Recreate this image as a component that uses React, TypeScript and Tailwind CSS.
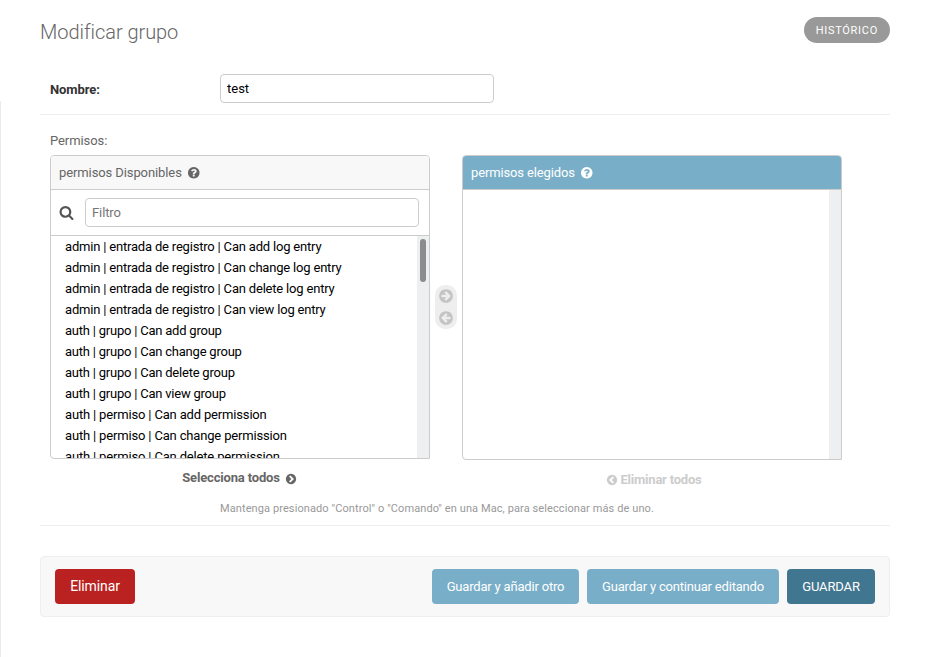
import React from "react";

const CIRCLE =
  "q0 209-103 385.5t-279.5 279.5-385.5 103-385.5-103-279.5-279.5-103-385.5 103-385.5 279.5-279.5 385.5-103 385.5 103 279.5 279.5 103 385.5z";

const ICONS = {
  search:
    "M1216 832q0-185-131.5-316.5t-316.5-131.5-316.5 131.5-131.5 316.5 131.5 316.5 316.5 131.5 316.5-131.5 131.5-316.5zm512 832q0 52-38 90t-90 38q-54 0-90-38l-343-342q-179 124-399 124-143 0-273.5-55.5t-225-150-150-225-55.5-273.5 55.5-273.5 150-225 225-150 273.5-55.5 273.5 55.5 225 150 150 225 55.5 273.5q0 220-124 399l343 343q37 37 37 90z",
  help:
    "M1024 1376v-192q0-14-9-23t-23-9h-192q-14 0-23 9t-9 23v192q0 14 9 23t23 9h192q14 0 23-9t9-23zm256-672q0-88-55.5-163t-138.5-116-170-41q-243 0-371 213-15 24 8 42l132 100q7 6 19 6 16 0 25-12 53-68 86-92 34-24 86-24 48 0 85.5 26t37.5 59q0 38-20 61t-68 45q-63 28-115.5 86.5t-52.5 125.5v36q0 14 9 23t23 9h192q14 0 23-9t9-23q0-19 21.5-49.5t54.5-49.5q32-18 49-28.5t46-35 44.5-48 28-60.5 12.5-81zm384 192" +
    CIRCLE,
  arrowRight:
    "M1413 896q0-27-18-45l-91-91-362-362q-18-18-45-18t-45 18l-91 91q-18 18-18 45t18 45l189 189h-502q-26 0-45 19t-19 45v128q0 26 19 45t45 19h502l-189 189q-19 19-19 45t19 45l91 91q18 18 45 18t45-18l362-362 91-91q18-18 18-45zm251 0" +
    CIRCLE,
  chevronRight:
    "M845 1395l454-454q19-19 19-45t-19-45l-454-454q-19-19-45-19t-45 19l-102 102q-19 19-19 45t19 45l307 307-307 307q-19 19-19 45t19 45l102 102q19 19 45 19t45-19zm819-499" +
    CIRCLE,
};

function Icon({ name, className }: { name: keyof typeof ICONS; className: string }) {
  return (
    <svg viewBox="0 0 1792 1792" fill="currentColor" className={`shrink-0 ${className}`} aria-hidden="true">
      <path d={ICONS[name]} />
    </svg>
  );
}

const PERMISSION_GROUPS = [
  {
    prefix: "admin | entrada de registro",
    tracking: "tracking-[-0.19px]",
    actions: ["Can add log entry", "Can change log entry", "Can delete log entry", "Can view log entry"],
  },
  {
    prefix: "auth | grupo",
    tracking: "tracking-[-0.22px]",
    actions: ["Can add group", "Can change group", "Can delete group", "Can view group"],
  },
  {
    prefix: "auth | permiso",
    tracking: "tracking-[-0.165px]",
    actions: ["Can add permission", "Can change permission", "Can delete permission"],
  },
];

function Available() {
  return (
    <div className="w-[380px]">
      <div className="flex h-[304px] flex-col overflow-hidden rounded-t rounded-bl border border-[#ccc]">
        <div className="flex h-[34px] shrink-0 items-center border-b border-[#ccc] bg-[#f8f8f8] pl-2 tracking-[-0.1px]">
          permisos Disponibles
          <Icon name="help" className="ml-[5px] size-[13.5px]" />
        </div>
        <div className="flex h-[46px] shrink-0 items-center border-b border-[#ccc] pl-2">
          <Icon name="search" className="size-[15px] text-[#555]" />
          <input
            placeholder="Filtro"
            className="ml-[11px] h-[29px] w-[334px] rounded border border-[#ccc] px-1.5 text-[13px] tracking-[-0.1px] placeholder:text-[#757575]"
          />
        </div>
        <div className="flex min-h-0 grow overflow-hidden">
          <ul className="grow pl-[14px] text-black">
            {PERMISSION_GROUPS.map(({ prefix, tracking, actions }) =>
              actions.map((action) => (
                <li key={prefix + action} className={`h-[21px] leading-[21px] ${tracking}`}>
                  {`${prefix} | ${action}`}
                </li>
              )),
            )}
          </ul>
          <div className="w-3 bg-[#edeff0] px-[3px] pt-[3px]">
            <div className="h-[43px] rounded-full bg-[#8b8c8e]" />
          </div>
        </div>
      </div>
      <div className="mt-[11px] flex h-4 items-center justify-center pr-px font-bold tracking-[-0.16px]">
        Selecciona todos
        <Icon name="chevronRight" className="mt-[2px] ml-[5px] size-3" />
      </div>
    </div>
  );
}

function Chosen() {
  return (
    <div className="w-[380px]">
      <div className="flex h-[305px] flex-col overflow-hidden rounded-t rounded-bl border border-[#ccc]">
        <div className="flex h-[34px] shrink-0 items-center border-b border-[#ccc] bg-[#79aec8] pl-2 tracking-[-0.13px] text-white">
          permisos elegidos
          <Icon name="help" className="ml-[5px] size-[13.5px]" />
        </div>
        <div className="flex grow justify-end">
          <div className="w-3 bg-[#edeff0]" />
        </div>
      </div>
      <div className="mt-3 flex h-4 items-center justify-center pl-[3px] font-bold tracking-[-0.22px] text-[#ccc]">
        <Icon name="chevronRight" className="mr-[3px] size-3 -scale-x-100" />
        Eliminar todos
      </div>
    </div>
  );
}

export default function App() {
  return (
    <div className="flex h-[657px] w-[930px] overflow-hidden bg-white font-['Roboto',sans-serif] text-[13px] leading-4 text-[#666]">
      <div className="mt-[101px] w-px bg-[#eaeaea]" />
      <main className="mr-10 ml-[39px] grow">
        <header className="flex h-[74px] items-start justify-between">
          <h1 className="mt-5 text-[20px] leading-6 font-light tracking-[-0.05px]">Modificar grupo</h1>
          <a className="mt-[17px] flex h-[26px] items-center rounded-full bg-[#999] px-3 pt-px text-[11px] tracking-[0.72px] text-white">
            HISTÓRICO
          </a>
        </header>
        <div className="flex h-[41px] items-start border-b border-[#eee] pl-[10px]">
          <label className="mt-2 w-[170px] font-bold tracking-[-0.08px] text-[#333]">Nombre:</label>
          <input
            defaultValue="test"
            className="h-[29px] w-[274px] rounded border border-[#ccc] px-1.5 text-[13px] text-black"
          />
        </div>
        <section className="h-[411px] border-b border-[#eee] pt-[18px] pl-[10px]">
          <div className="h-[22px] tracking-[-0.08px]">Permisos:</div>
          <div className="flex items-start">
            <Available />
            <div className="mx-[5px] mt-[130px] flex h-11 w-[22px] flex-col items-center justify-between rounded-[10px] bg-[#eee] py-[3px] text-[#c4c4c4]">
              <Icon name="arrowRight" className="size-4" />
              <Icon name="arrowRight" className="size-4 -scale-x-100" />
            </div>
            <Chosen />
          </div>
          <p className="mt-[13px] ml-[170px] text-[11px] leading-4 tracking-[0.098px] text-[#999]">
            Mantenga presionado "Control" o "Comando" en una Mac, para seleccionar más de uno.
          </p>
        </section>
        <footer className="mt-[30px] flex h-[61px] items-center gap-2 rounded border border-[#eee] bg-[#f8f8f8] px-[14px] text-white">
          <button className="mr-auto h-[35px] w-20 rounded bg-[#ba2121] pb-px text-[14px] tracking-[-0.12px]">Eliminar</button>
          <button className="h-[35px] w-[147px] rounded bg-[#79aec8] tracking-[-0.19px]">Guardar y añadir otro</button>
          <button className="h-[35px] w-[192px] rounded bg-[#79aec8] tracking-[-0.19px]">Guardar y continuar editando</button>
          <button className="h-[35px] w-[88px] rounded bg-[#417690] tracking-[-0.14px]">GUARDAR</button>
        </footer>
      </main>
    </div>
  );
}
